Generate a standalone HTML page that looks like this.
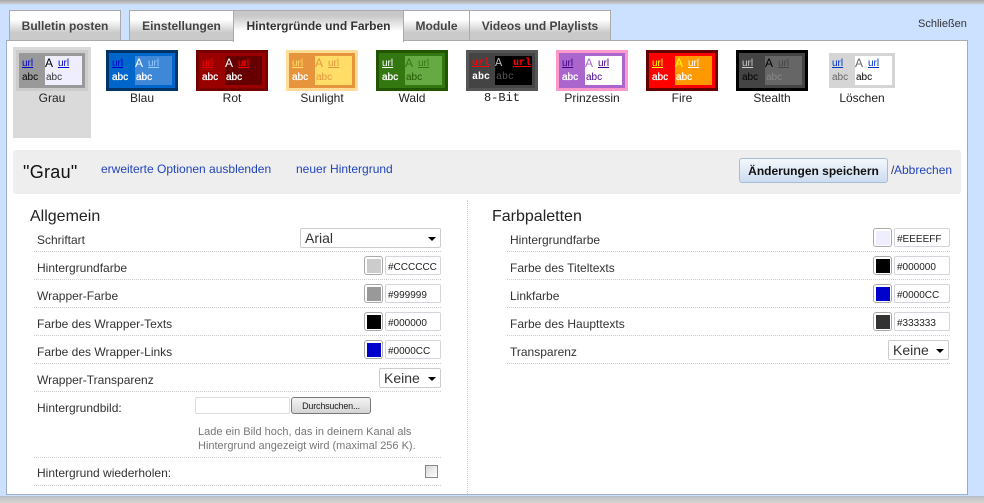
<!DOCTYPE html>
<html lang="de"><head><meta charset="utf-8"><title>Hintergründe und Farben</title>
<style>
html,body{margin:0;padding:0}
body{width:984px;height:503px;position:relative;overflow:hidden;background:#cce0ff;font-family:"Liberation Sans",Arial,sans-serif;color:#333}
div,a,span{position:absolute;white-space:nowrap;box-sizing:border-box}
#top{left:0;top:0;width:984px;height:5px;background:linear-gradient(#a8a8a8,#c0c0c0 55%,#cce0ff)}
#bot{left:0;top:496px;width:984px;height:7px;background:linear-gradient(#b4bcc8,#c8c8c8 40%,#d4d4d4)}
.tab{top:10px;height:31px;border:1px solid #aaa;background:linear-gradient(#fff 30%,#cacaca 75%);font:bold 12px/31px "Liberation Sans",Arial,sans-serif;color:#444;text-align:center}
#panel{left:6px;top:40px;width:962px;height:455px;background:#fff;border:1px solid #aaa;border-bottom-color:#9db3d0;border-left-color:#9fb0c8}
#sel{left:13px;top:47px;width:78px;height:91px;background:#dadada}
.t{top:50px;width:72px;height:41px;border:3px solid}
.i{left:26px;top:3px;width:37px;height:29px}
.u{text-decoration:underline;font-size:10px;line-height:12px}
.abc{font-size:10px;line-height:12px}
.wh{-webkit-text-stroke:.3px currentColor}
.A{font-size:12px;line-height:14px}
.lab{top:91px;width:72px;text-align:center;font-size:12px;line-height:14px;color:#222}
.ln{height:0;border-top:1px dotted #ccc}
.r{font-size:12px;line-height:14px;color:#333}
.sw{width:19px;height:19px;border:1px solid #aaa;border-radius:3px;background:#fff}
.sw i{position:absolute;left:2px;top:2px;width:14px;height:14px;display:block}
.in{width:56px;height:19px;border:1px solid #d4d4dc;border-radius:2px;font-size:10px;line-height:21px;padding-left:2px;color:#222;background:#fff}
.dd{height:20px;border:1px solid #ccc;border-radius:2px;background:#fff;font-size:14px;line-height:19px;color:#333;padding-left:4px}
.dd b{position:absolute;right:4px;top:8px;width:0;height:0;border:4px solid transparent;border-top:4px solid #000;border-bottom:0}
a{color:#2244bb;text-decoration:none;font-size:12px;line-height:14px}
</style></head><body>
<div id="top"></div>
<div id="bot"></div>
<div id="panel"></div>
<div class="tab" style="left:9px;width:112px">Bulletin posten</div>
<div class="tab" style="left:129px;width:105px">Einstellungen</div>
<div class="tab" style="left:233px;width:171px;height:32px;color:#333;background:linear-gradient(#c8c8c8 15%,#fff 65%);border-bottom:0;z-index:2">Hintergründe und Farben</div>
<div class="tab" style="left:403px;width:67px">Module</div>
<div class="tab" style="left:469px;width:142px">Videos und Playlists</div>
<div style="left:918px;top:18px;font-size:11px;line-height:13px;color:#333">Schließen</div>
<div id="sel"></div>

<div class="t" style="left:16px;border-color:#ccc;background:#999"><div class="i" style="background:#eef"></div>
<span class="u" style="left:3px;top:5px;color:#00c">url</span><span class="abc" style="left:3px;top:19px;color:#000">abc</span><span class="A" style="left:26px;top:3px;color:#000">A</span><span class="u" style="left:39px;top:5px;color:#00c">url</span><span class="abc" style="left:27px;top:19px;color:#333">abc</span></div>
<div class="lab" style="left:16px">Grau</div>

<div class="t" style="left:106px;border-color:#036;background:#06c"><div class="i" style="background:#3f88d8"></div>
<span class="u" style="left:3px;top:5px;color:#00c">url</span><span class="abc wh" style="left:3px;top:19px;color:#fff">abc</span><span class="A" style="left:26px;top:3px;color:#fff">A</span><span class="u" style="left:39px;top:5px;color:#9cf">url</span><span class="abc wh" style="left:27px;top:19px;color:#fff">abc</span></div>
<div class="lab" style="left:106px">Blau</div>

<div class="t" style="left:196px;border-color:#700;background:#900"><div class="i" style="background:#600"></div>
<span class="u" style="left:3px;top:5px;color:#f00">url</span><span class="abc wh" style="left:3px;top:19px;color:#fff">abc</span><span class="A" style="left:26px;top:3px;color:#fff">A</span><span class="u" style="left:39px;top:5px;color:#f00">url</span><span class="abc wh" style="left:27px;top:19px;color:#fff">abc</span></div>
<div class="lab" style="left:196px">Rot</div>

<div class="t" style="left:286px;border-color:#fd9;background:#e6953c"><div class="i" style="background:#fd6"></div>
<span class="u" style="left:3px;top:5px;color:#fd6">url</span><span class="abc wh" style="left:3px;top:19px;color:#fff">abc</span><span class="A" style="left:26px;top:3px;color:#e6953c">A</span><span class="u" style="left:39px;top:5px;color:#e6953c">url</span><span class="abc" style="left:27px;top:19px;color:#e6953c">abc</span></div>
<div class="lab" style="left:286px">Sunlight</div>

<div class="t" style="left:376px;border-color:#250;background:#371"><div class="i" style="background:#6a4"></div>
<span class="u" style="left:3px;top:5px;color:#fff">url</span><span class="abc wh" style="left:3px;top:19px;color:#fff">abc</span><span class="A" style="left:26px;top:3px;color:#371">A</span><span class="u" style="left:39px;top:5px;color:#371">url</span><span class="abc" style="left:27px;top:19px;color:#250">abc</span></div>
<div class="lab" style="left:376px">Wald</div>

<div class="t" style="left:466px;border-color:#555;background:#444"><div class="i" style="background:#000"></div>
<span class="u" style="left:3px;top:5px;color:#f00;font-weight:bold;font-family:'Liberation Mono',monospace">url</span><span class="abc" style="left:3px;top:19px;color:#fff;font-weight:bold;font-family:'Liberation Mono',monospace">abc</span><span class="A" style="left:26px;top:3px;color:#bbb;font-family:'Liberation Mono',monospace">A</span><span class="u" style="left:44px;top:5px;color:#f00;font-weight:bold;font-family:'Liberation Mono',monospace">url</span><span class="abc" style="left:27px;top:19px;color:#555;font-family:'Liberation Mono',monospace">abc</span></div>
<div class="lab" style="left:466px;font-family:'Liberation Mono',monospace">8-Bit</div>

<div class="t" style="left:556px;border-color:#f9c;background:#a6c"><div class="i" style="background:#fff"></div>
<span class="u" style="left:3px;top:5px;color:#408">url</span><span class="abc wh" style="left:3px;top:19px;color:#fff">abc</span><span class="A" style="left:26px;top:3px;color:#a6c">A</span><span class="u" style="left:39px;top:5px;color:#408">url</span><span class="abc" style="left:27px;top:19px;color:#408">abc</span></div>
<div class="lab" style="left:556px">Prinzessin</div>

<div class="t" style="left:646px;border-color:#600;background:#f00"><div class="i" style="background:#f90"></div>
<span class="u" style="left:3px;top:5px;color:#ff0">url</span><span class="abc wh" style="left:3px;top:19px;color:#fff">abc</span><span class="A" style="left:26px;top:3px;color:#ff0">A</span><span class="u" style="left:39px;top:5px;color:#fff">url</span><span class="abc wh" style="left:27px;top:19px;color:#fff">abc</span></div>
<div class="lab" style="left:646px">Fire</div>

<div class="t" style="left:736px;border-color:#000;background:#444"><div class="i" style="background:#666"></div>
<span class="u" style="left:3px;top:5px;color:#ccc">url</span><span class="abc" style="left:3px;top:19px;color:#000">abc</span><span class="A" style="left:26px;top:3px;color:#000">A</span><span class="u" style="left:39px;top:5px;color:#444">url</span><span class="abc" style="left:27px;top:19px;color:#888">abc</span></div>
<div class="lab" style="left:736px">Stealth</div>

<div style="left:829px;top:53px;width:66px;height:35px;background:#d5d5d5"><div style="left:26px;top:3px;width:37px;height:29px;background:#fff"></div>
<span class="u" style="left:3px;top:5px;color:#03c">url</span><span class="abc" style="left:3px;top:19px;color:#666">abc</span><span class="A" style="left:26px;top:3px;color:#666">A</span><span class="u" style="left:39px;top:5px;color:#03c">url</span><span class="abc" style="left:27px;top:19px;color:#000">abc</span></div>
<div class="lab" style="left:826px">Löschen</div>

<div style="left:13px;top:150px;width:948px;height:44px;background:#eee;border-radius:3px"></div>
<div style="left:23px;top:161px;font-size:18px;line-height:22px;letter-spacing:.3px;color:#111">"Grau"</div>
<a style="left:101px;top:162px">erweiterte Optionen ausblenden</a>
<a style="left:296px;top:162px">neuer Hintergrund</a>
<div style="left:739px;top:158px;width:149px;height:25px;border:1px solid #a9bcd6;border-radius:3px;background:linear-gradient(#f4f8fd,#ccdcf0);font:bold 12px/24px 'Liberation Sans',Arial,sans-serif;color:#111;text-align:center">Änderungen speichern</div>
<div class="r" style="left:891px;top:163px;color:#334">/</div><a style="left:894px;top:163px">Abbrechen</a>

<div style="left:467px;top:200px;width:0;height:294px;border-left:1px dotted #ccc"></div>

<div style="left:30px;top:207px;font-size:16px;line-height:19px;color:#222">Allgemein</div>
<div style="left:492px;top:207px;font-size:16px;line-height:19px;color:#222">Farbpaletten</div>

<div class="ln" style="left:34px;top:251px;width:407px"></div>
<div class="ln" style="left:34px;top:279px;width:407px"></div>
<div class="ln" style="left:34px;top:307px;width:407px"></div>
<div class="ln" style="left:34px;top:335px;width:407px"></div>
<div class="ln" style="left:34px;top:363px;width:407px"></div>
<div class="ln" style="left:34px;top:391px;width:407px"></div>
<div class="ln" style="left:34px;top:457px;width:407px"></div>
<div class="ln" style="left:34px;top:485px;width:407px"></div>

<div class="r" style="left:37px;top:233px">Schriftart</div>
<div class="dd" style="left:300px;top:228px;width:141px">Arial<b></b></div>
<div class="r" style="left:37px;top:261px">Hintergrundfarbe</div>
<div class="sw" style="left:364px;top:256px"><i style="background:#ccc"></i></div><div class="in" style="left:385px;top:256px">#CCCCCC</div>
<div class="r" style="left:37px;top:289px">Wrapper-Farbe</div>
<div class="sw" style="left:364px;top:284px"><i style="background:#999"></i></div><div class="in" style="left:385px;top:284px">#999999</div>
<div class="r" style="left:37px;top:317px">Farbe des Wrapper-Texts</div>
<div class="sw" style="left:364px;top:312px"><i style="background:#000"></i></div><div class="in" style="left:385px;top:312px">#000000</div>
<div class="r" style="left:37px;top:345px">Farbe des Wrapper-Links</div>
<div class="sw" style="left:364px;top:340px"><i style="background:#00c"></i></div><div class="in" style="left:385px;top:340px">#0000CC</div>
<div class="r" style="left:37px;top:373px">Wrapper-Transparenz</div>
<div class="dd" style="left:379px;top:368px;width:62px">Keine<b></b></div>
<div class="r" style="left:37px;top:401px">Hintergrundbild:</div>
<div style="left:195px;top:397px;width:95px;height:17px;border:1px solid #ddd;border-radius:2px;background:#fff"></div>
<div style="left:291px;top:397px;width:80px;height:17px;border:1px solid #777;border-radius:3px;background:linear-gradient(#f4f4f4,#d4d4d4);font-size:9px;letter-spacing:-.2px;line-height:17px;text-align:center;color:#222">Durchsuchen...</div>
<div style="left:198px;top:425px;font-size:11px;line-height:14px;color:#777">Lade ein Bild hoch, das in deinem Kanal als<br>Hintergrund angezeigt wird (maximal 256 K).</div>
<div class="r" style="left:37px;top:466px">Hintergrund wiederholen:</div>
<div style="left:425px;top:465px;width:13px;height:13px;border:1px solid #888;background:linear-gradient(135deg,#d8d8d8,#fff)"></div>

<div class="ln" style="left:507px;top:251px;width:443px"></div>
<div class="ln" style="left:507px;top:279px;width:443px"></div>
<div class="ln" style="left:507px;top:307px;width:443px"></div>
<div class="ln" style="left:507px;top:335px;width:443px"></div>
<div class="ln" style="left:507px;top:363px;width:443px"></div>

<div class="r" style="left:510px;top:233px">Hintergrundfarbe</div>
<div class="sw" style="left:873px;top:228px"><i style="background:#eef"></i></div><div class="in" style="left:894px;top:228px">#EEEEFF</div>
<div class="r" style="left:510px;top:261px">Farbe des Titeltexts</div>
<div class="sw" style="left:873px;top:256px"><i style="background:#000"></i></div><div class="in" style="left:894px;top:256px">#000000</div>
<div class="r" style="left:510px;top:289px">Linkfarbe</div>
<div class="sw" style="left:873px;top:284px"><i style="background:#00c"></i></div><div class="in" style="left:894px;top:284px">#0000CC</div>
<div class="r" style="left:510px;top:317px">Farbe des Haupttexts</div>
<div class="sw" style="left:873px;top:312px"><i style="background:#333"></i></div><div class="in" style="left:894px;top:312px">#333333</div>
<div class="r" style="left:510px;top:345px">Transparenz</div>
<div class="dd" style="left:888px;top:340px;width:61px">Keine<b></b></div>
</body></html>
